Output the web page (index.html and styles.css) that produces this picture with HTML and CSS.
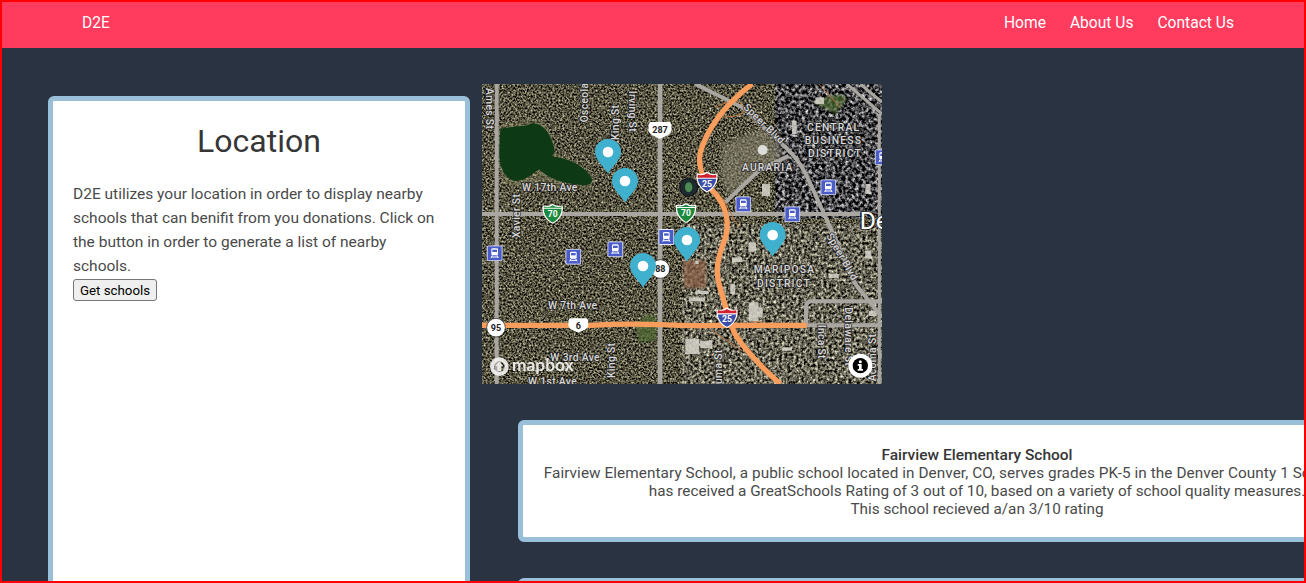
FILE: index.html
```html
<!DOCTYPE html>
<html lang="en">
<head>
<meta charset="utf-8">
<title>D2E</title>
<link rel="stylesheet" href="styles.css">
</head>
<body>
<div class="page">
  <nav class="nav">
    <a class="brand">D2E</a>
    <div class="nav-links"><a>Home</a><a>About Us</a><a>Contact Us</a></div>
  </nav>
  <main class="main">
    <section class="card side">
      <h1 class="title">Location</h1>
      <p class="intro">D2E utilizes your location in order to display nearby schools that can benifit from you donations. Click on the button in order to generate a list of nearby schools.</p>
      <button class="btn">Get schools</button>
    </section>
    <div class="results">
      <svg class="map" viewBox="0 0 1200 900" xmlns="http://www.w3.org/2000/svg">
        <defs>
          <filter id="sat" x="0" y="0" width="100%" height="100%" color-interpolation-filters="sRGB">
            <feTurbulence type="fractalNoise" baseFrequency="0.17" numOctaves="3" seed="7"/>
            <feColorMatrix type="matrix" values="1.4 0 0 0 -0.37  1.4 0 0 0 -0.38  1.2 0 0 0 -0.35  0 0 0 0 1"/>
          </filter>
          <filter id="dt" x="0" y="0" width="100%" height="100%" color-interpolation-filters="sRGB">
            <feTurbulence type="fractalNoise" baseFrequency="0.1" numOctaves="3" seed="21"/>
            <feColorMatrix type="matrix" values="1.9 0 0 0 -0.68  1.9 0 0 0 -0.68  1.9 0 0 0 -0.67  0 0 0 0 1"/>
          </filter>
          <filter id="ind" x="0" y="0" width="100%" height="100%" color-interpolation-filters="sRGB">
            <feTurbulence type="fractalNoise" baseFrequency="0.12" numOctaves="3" seed="4"/>
            <feColorMatrix type="matrix" values="1.6 0 0 0 -0.4  1.6 0 0 0 -0.41  1.45 0 0 0 -0.39  0 0 0 0 1"/>
          </filter>
          <pattern id="grid" width="30" height="27" patternUnits="userSpaceOnUse">
            <path class="grid-line" d="M0 0H30M0 0V27"/>
          </pattern>
          <symbol id="pin" viewBox="-40 -40 80 106" overflow="visible">
            <path class="pin-body" d="M0 65C-8 48-39 24-39 0A39 39 0 0 1 39 0C39 24 8 48 0 65Z"/>
            <circle class="pin-dot" r="16"/>
          </symbol>
          <symbol id="train" viewBox="0 0 48 48">
            <rect class="train-box" x="1.5" y="1.5" width="45" height="45" rx="3"/>
            <rect class="train-fg" x="14" y="9" width="20" height="21" rx="4"/>
            <rect class="train-win" x="17" y="13" width="14" height="7"/>
            <path class="train-rail" d="M17 30L13 38M31 30L35 38M14 35H34"/>
          </symbol>
          <symbol id="i25" viewBox="-30 -30 60 60">
            <path class="sh-white" d="M-28-22Q-14-18 0-27Q14-18 28-22C32 0 20 20 0 29C-20 20-32 0-28-22Z"/>
            <path class="sh-blue" d="M-25-8H25C24 5 15 18 0 26C-15 18-24 5-25-8Z"/>
            <path class="sh-red" d="M-25-19Q-12-15 0-23Q12-15 25-19L26-11H-26Z"/>
            <text class="sh-text" y="14" text-anchor="middle">25</text>
          </symbol>
          <symbol id="i70" viewBox="-30 -30 60 60">
            <path class="sh-white" d="M-28-22Q-14-18 0-27Q14-18 28-22C32 0 20 20 0 29C-20 20-32 0-28-22Z"/>
            <path class="sh-green" d="M-25-13H25C25 3 15 18 0 26C-15 18-25 3-25-13Z"/>
            <path class="sh-green" d="M-25-19Q-12-15 0-23Q12-15 25-19L25-16H-25Z"/>
            <text class="sh-text" y="10" text-anchor="middle">70</text>
          </symbol>
          <symbol id="us" viewBox="-36 -27 72 54">
            <path class="sh-white" d="M-30-25H30L35-16Q33-10 35-4C36 10 20 18 0 25C-20 18-36 10-35-4Q-33-10-35-16Z"/>
          </symbol>
        </defs>

        <rect class="base" width="1200" height="900"/>
        <rect class="sat" width="1200" height="900" filter="url(#sat)"/>
        <rect class="grid" width="660" height="900" fill="url(#grid)"/>
        <path class="ind" d="M600 420H1200V900H640L600 700Z" filter="url(#ind)"/>
        <path class="dt" d="M880 0H1200V370L1020 400L880 180Z" filter="url(#dt)"/>
        <path class="tan" d="M720 180L840 130L900 190L900 225L820 270L740 340L715 260Z"/>
        <path class="brick" d="M602 528H672V612H606Z"/>
        <path class="verd" d="M465 720Q500 675 525 705L520 770L470 775Z"/>
        <path class="verd" d="M995 55Q1080 15 1095 45L1060 90Z"/>
        <path class="shore" d="M48 130Q120 100 190 110L225 210Q310 230 340 290L325 315L120 310L60 300L42 200Z"/>
        <path class="lake" d="M55 135C90 125 135 130 150 118C190 115 215 170 218 203C212 212 208 215 218 219C260 222 315 250 330 285C332 300 318 306 295 303C240 298 195 282 172 256C150 268 130 292 100 291C70 285 52 255 52 205Z"/>
        <circle class="stadium" cx="620" cy="310" r="27"/>
        <ellipse class="pitch" cx="620" cy="310" rx="11" ry="15"/>
        <circle class="dome" cx="842" cy="198" r="15"/>

        <g class="blds">
          <rect x="800" y="655" width="30" height="58"/><rect x="830" y="670" width="12" height="30"/>
          <rect x="610" y="765" width="42" height="45"/><rect x="655" y="770" width="36" height="22"/>
          <rect x="640" y="620" width="40" height="10"/><rect x="620" y="640" width="50" height="12"/>
          <rect x="840" y="300" width="24" height="36"/><rect x="750" y="520" width="30" height="14"/>
          <rect x="800" y="475" width="22" height="28"/><rect x="745" y="600" width="14" height="30"/>
          <rect x="900" y="790" width="30" height="10"/><rect x="640" y="530" width="10" height="10"/>
          <rect x="1040" y="570" width="30" height="12"/><rect x="930" y="110" width="14" height="40"/>
          <rect x="1000" y="40" width="26" height="20"/><rect x="1150" y="300" width="16" height="30"/>
          <rect x="1160" y="680" width="24" height="16"/><rect x="1150" y="500" width="18" height="24"/>
        </g>

        <g class="roads">
          <path class="road" d="M44 0V900"/>
          <path class="road wide" d="M534 0V900"/>
          <path class="road" d="M0 390H1135"/>
          <path class="road" d="M640 0L780 70L900 180C950 225 965 255 990 310L1040 420L1120 600L1200 700"/>
          <path class="road" d="M730 355L830 260L920 215"/>
          <path class="road" d="M972 724V670Q972 652 990 652H1200M972 724H1200"/>
          <path class="road thin" d="M1095 0L1200 90M1135 0L1200 55M1192 90V900"/>
          <path class="ramp" d="M700 70Q780 30 790 80Q760 110 700 90M1010 0L1075 70M720 340L770 430M690 740L780 800M800 720Q840 700 850 730"/>
          <path class="free" d="M810 0C745 50 680 120 655 205C645 260 670 300 705 335C735 375 740 420 732 455C705 530 695 560 720 630C735 680 740 720 765 760C800 810 850 860 895 900"/>
          <path class="free" d="M0 724H330Q420 718 540 722Q620 726 700 724H974"/>
        </g>

        <g class="labels">
          <text transform="translate(12 12) rotate(90)">Ames St</text>
          <text transform="translate(318 115) rotate(-90)">Osceola St</text>
          <text transform="translate(410 168) rotate(-90)">King St</text>
          <text transform="translate(442 20) rotate(90)">Irving St</text>
          <text transform="translate(115 462) rotate(-90)">Xavier St</text>
          <text x="120" y="320">W 17th Ave</text>
          <text x="198" y="675">W 7th Ave</text>
          <text x="205" y="830">W 3rd Ave</text>
          <text x="138" y="902">W 1st Ave</text>
          <text transform="translate(398 882) rotate(-90)">King St</text>
          <text transform="translate(782 72) rotate(44)">Speer Blvd</text>
          <text transform="translate(1032 455) rotate(60)">Speer Blvd</text>
          <text transform="translate(1007 722) rotate(90)">Inca St</text>
          <text transform="translate(1090 670) rotate(90)">Delaware St</text>
          <text transform="translate(1182 892) rotate(-90)">Acoma St</text>
          <text transform="translate(720 900) rotate(-90)">uma St</text>
          <text class="area" x="975" y="140">CENTRAL</text>
          <text class="area" x="968" y="180">BUSINESS</text>
          <text class="area" x="978" y="219">DISTRICT</text>
          <text class="area" x="780" y="262">AURARIA</text>
          <text class="area" x="815" y="568">MARIPOSA</text>
          <text class="area" x="825" y="608">DISTRICT</text>
          <text class="city" x="1133" y="436">Denver</text>
        </g>

        <use href="#train" x="14" y="484" width="48" height="48"/>
        <use href="#train" x="250" y="494" width="48" height="48"/>
        <use href="#train" x="376" y="472" width="48" height="48"/>
        <use href="#train" x="529" y="435" width="48" height="48"/>
        <use href="#train" x="760" y="337" width="48" height="48"/>
        <use href="#train" x="907" y="367" width="48" height="48"/>
        <use href="#train" x="1015" y="286" width="48" height="48"/>
        <use href="#train" x="1178" y="196" width="48" height="48"/>

        <use href="#us" x="498" y="112" width="72" height="54"/>
        <text class="sh-dark" x="534" y="148" text-anchor="middle">287</text>
        <use href="#us" x="258" y="698" width="62" height="52"/>
        <text class="sh-dark" x="289" y="734" text-anchor="middle">6</text>
        <circle class="round" cx="42" cy="731" r="28"/>
        <text class="sh-dark" x="42" y="741" text-anchor="middle">95</text>
        <circle class="round" cx="535" cy="555" r="28"/>
        <text class="sh-dark" x="535" y="565" text-anchor="middle">88</text>
        <use href="#i70" x="180" y="356" width="64" height="64"/>
        <use href="#i70" x="580" y="354" width="64" height="64"/>
        <use href="#i25" x="642" y="260" width="66" height="66"/>
        <use href="#i25" x="702" y="667" width="66" height="66"/>

        <use href="#pin" x="338" y="164" width="80" height="106"/>
        <use href="#pin" x="389" y="251" width="80" height="106"/>
        <use href="#pin" x="443" y="506" width="80" height="106"/>
        <use href="#pin" x="575" y="428" width="80" height="106"/>
        <use href="#pin" x="832" y="413" width="80" height="106"/>

        <circle class="logo-ring" cx="52" cy="848" r="22"/>
        <path class="logo-arrow" d="M52 832L64 846H58V862H46V846H40Z"/>
        <text class="logo-text" x="90" y="862">mapbox</text>
        <circle class="info-halo" cx="1135" cy="845" r="36"/>
        <circle class="info-disc" cx="1135" cy="845" r="23"/>
        <circle class="info-mark" cx="1135" cy="833" r="4.5"/>
        <path class="info-mark" d="M1127 840H1139V855H1143V860H1127V855H1131V845H1127Z"/>
      </svg>
      <section class="card school">
        <strong class="school-name">Fairview Elementary School</strong><br>
        <span class="school-lead">Fairview Elementary School, a public school located in Denver, CO, serves grades PK-5 in the Denver County 1 School District. It</span><br>
        has received a GreatSchools Rating of 3 out of 10, based on a variety of school quality measures.<br>
        This school recieved a/an 3/10 rating
      </section>
      <section class="card school">
        <strong class="school-name">Cheltenham Elementary School</strong>
      </section>
    </div>
  </main>
</div>
</body>
</html>
```
FILE: styles.css
```css
* { box-sizing: border-box; }
html, body { margin: 0; padding: 0; }
body {
  font-family: Roboto, "Liberation Sans", sans-serif;
  font-size: 16px;
  color: #4a4a4a;
  background: #2a3342;
}
.page {
  height: 583px;
  border: 2px solid #ff0000;
  overflow: hidden;
  background: #2a3342;
}
.nav {
  display: flex;
  align-items: center;
  justify-content: space-between;
  height: 46px;
  padding: 0 70px 5px 80px;
  background: #ff3b5e;
  color: #fff;
  font-size: 15.6px;
}
.nav-links { display: flex; gap: 24px; }
.main {
  display: flex;
  align-items: flex-start;
  padding: 36px 0 0 46px;
}
.card {
  background: #fff;
  border: 5px solid #9ac0d9;
  border-radius: 6px;
}
.side {
  flex: 0 0 422px;
  height: 600px;
  margin-top: 12px;
  padding: 20px;
}
.title {
  margin: 0 0 21px;
  font-size: 32px;
  line-height: 40px;
  font-weight: 400;
  text-align: center;
  color: #363636;
}
.intro {
  margin: 0;
  font-size: 15.5px;
  line-height: 24px;
}
.btn {
  display: block;
  width: 84px;
  height: 22px;
  margin-top: 1px;
  padding: 0;
  font: 13.3px Roboto, sans-serif;
  color: #000;
  background: #efefef;
  border: 1px solid #767676;
  border-radius: 3px;
}
.results {
  flex: 0 0 954px;
  margin-left: 12px;
}
.map {
  display: block;
  width: 400px;
  height: 300px;
}
.school {
  width: 918px;
  height: 122px;
  margin: 36px 0 0 36px;
  padding: 21px 20px 19px;
  font-size: 15.3px;
  line-height: 18px;
  text-align: center;
  white-space: nowrap;
}
.school-name { font-size: 15.5px; font-weight: 500; color: #363636; }
.school-lead { letter-spacing: 0.08px; }

/* map artwork */
.base { fill: #55533f; }
.grid { opacity: 0.22; }
.grid-line { fill: none; stroke: #cfc9ae; stroke-width: 1.6; }
.tan { fill: #8b8672; opacity: 0.55; filter: blur(6px); }
.brick { fill: #8e6248; opacity: 0.7; filter: blur(3px); }
.verd { fill: #4f6b33; opacity: 0.7; filter: blur(3px); }
.shore { fill: #8a8a62; opacity: 0.35; filter: blur(3px); }
.lake { fill: #0d3a14; }
.stadium { fill: #1d2a2e; stroke: #0b0f12; stroke-width: 3; }
.pitch { fill: #4c8a52; }
.dome { fill: #dcdcd8; }
.blds rect { fill: #d8d6cc; opacity: 0.85; }
.road { fill: none; stroke: #aaa7a3; stroke-width: 12; }
.road.wide { stroke-width: 14; }
.road.thin { stroke-width: 9; }
.ramp { fill: none; stroke: #c07a45; stroke-width: 3; }
.free { fill: none; stroke: #f89d5b; stroke-width: 16; stroke-linejoin: round; }
.labels text {
  font: 500 31px Roboto, sans-serif;
  letter-spacing: 1px;
  fill: #d8d7d9;
  stroke: rgba(30, 30, 30, 0.7);
  stroke-width: 6px;
  paint-order: stroke;
}
.labels text.area { letter-spacing: 3.5px; }
.labels text.city {
  font-size: 74px;
  font-weight: 400;
  letter-spacing: 0;
  fill: #fff;
  stroke-width: 6px;
}
.pin-body { fill: #3fb1ce; }
.pin-dot { fill: #fff; }
.train-box { fill: #4a5cc8; stroke: #e9e9f5; stroke-width: 3; }
.train-fg { fill: #fff; }
.train-win { fill: #4a5cc8; }
.train-rail { fill: none; stroke: #fff; stroke-width: 3; }
.sh-white { fill: #fff; }
.sh-blue { fill: #3c4fa8; }
.sh-red { fill: #d0232f; }
.sh-green { fill: #1b8a3e; }
.sh-text { font: 700 24px Roboto, sans-serif; fill: #fff; }
.sh-dark { font: 700 27px Roboto, sans-serif; fill: #222; }
.round { fill: #fff; stroke: #111; stroke-width: 2; }
.logo-ring { fill: none; stroke: #f4f4f4; stroke-width: 12; opacity: 0.9; }
.logo-arrow { fill: #f4f4f4; opacity: 0.9; }
.logo-text { font: 700 52px Lato, sans-serif; fill: #f4f4f4; opacity: 0.92; }
.info-halo { fill: #fff; }
.info-disc { fill: #000; }
.info-mark { fill: #fff; }
```
